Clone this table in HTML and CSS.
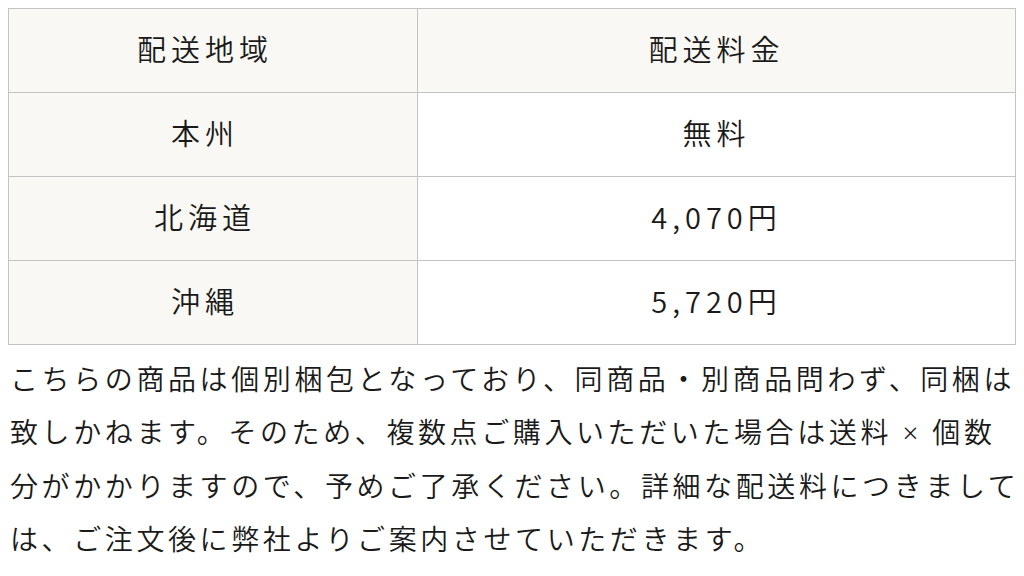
FILE: index.html
```html
<!DOCTYPE html>
<html lang="ja">
<head>
<meta charset="utf-8">
<link rel="stylesheet" href="styles.css">
</head>
<body>
<table class="ship">
  <tr class="head">
    <th class="area">配送地域</th>
    <th class="fee">配送料金</th>
  </tr>
  <tr>
    <td class="area">本州</td>
    <td class="fee">無料</td>
  </tr>
  <tr>
    <td class="area">北海道</td>
    <td class="fee">4,070円</td>
  </tr>
  <tr>
    <td class="area">沖縄</td>
    <td class="fee">5,720円</td>
  </tr>
</table>
<p class="note">こちらの商品は個別梱包となっており、同商品・別商品問わず、同梱は致しかねます。そのため、複数点ご購入いただいた場合は送料<span class="times"> × </span>個数分がかかりますので、予めご了承ください。詳細な配送料につきましては、ご注文後に弊社よりご案内させていただきます。</p>
</body>
</html>
```

FILE: styles.css
```css
html, body {
  margin: 0;
  padding: 0;
  background: #ffffff;
}
body {
  padding: 8px;
  font-family: "Noto Sans CJK JP", "Noto Sans", sans-serif;
  color: #1a1a1a;
}
.ship {
  width: 1008px;
  border-collapse: collapse;
  table-layout: fixed;
}
.ship th,
.ship td {
  height: 78px;
  border: 1px solid #c4c4c4;
  font-weight: 350;
  font-size: 29px;
  letter-spacing: 5px;
  text-align: center;
  vertical-align: middle;
  padding: 0 0 5px 0;
  line-height: 1;
}
.ship .area {
  width: 392px;
  background: #f9f8f4;
  padding-right: 16px;
}
.ship .fee {
  background: #ffffff;
}
.ship .head .fee {
  background: #f9f8f4;
}
.note {
  margin: 7px -8px 0 2px;
  font-size: 28px;
  font-weight: 350;
  line-height: 53px;
  letter-spacing: 3.6px;
}
.times {
  font-family: "Noto Sans", sans-serif;
  font-size: 27px;
}
```
